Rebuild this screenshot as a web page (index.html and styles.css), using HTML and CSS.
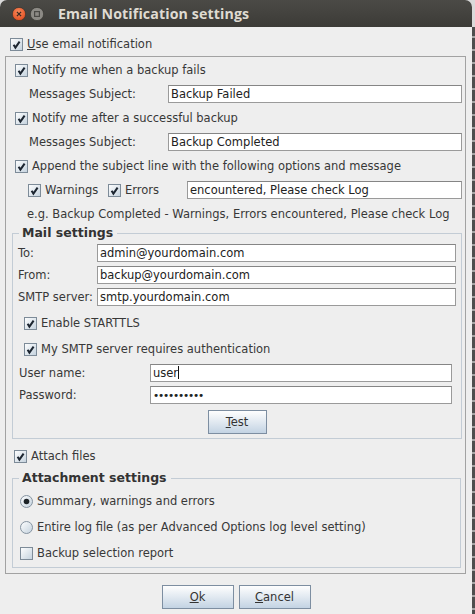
FILE: index.html
```html
<!DOCTYPE html>
<html>
<head>
<meta charset="utf-8">
<link rel="stylesheet" href="styles.css">
</head>
<body>
<svg class="defs" width="0" height="0" aria-hidden="true">
  <defs>
    <linearGradient id="gbox" x1="0" y1="0" x2="1" y2="1">
      <stop offset="0" stop-color="#ffffff"/>
      <stop offset="1" stop-color="#c3d1dd"/>
    </linearGradient>
    <symbol id="cbOff" viewBox="0 0 13 13">
      <rect x="0.5" y="0.5" width="12" height="12" fill="url(#gbox)" stroke="#7d8b98"/>
    </symbol>
    <symbol id="cbOn" viewBox="0 0 13 13">
      <rect x="0.5" y="0.5" width="12" height="12" fill="url(#gbox)" stroke="#7d8b98"/>
      <path d="M3.6 6.8 L5.4 9.6 L9.6 3.6" fill="none" stroke="#1c2530" stroke-width="2"/>
    </symbol>
    <symbol id="rdOff" viewBox="0 0 13 13">
      <circle cx="6.5" cy="6.5" r="6" fill="url(#gbox)" stroke="#8593a0"/>
    </symbol>
    <symbol id="rdOn" viewBox="0 0 13 13">
      <circle cx="6.5" cy="6.5" r="6" fill="url(#gbox)" stroke="#8593a0"/>
      <circle cx="6.5" cy="6.5" r="2.8" fill="#1c2226"/>
    </symbol>
  </defs>
</svg>
<div class="screen">
  <div class="window">
    <div class="titlebar">
      <svg class="wbtn wclose" viewBox="0 0 14 14">
        <defs>
          <radialGradient id="gclose" cx="0.45" cy="0.35" r="0.7">
            <stop offset="0" stop-color="#f88a5c"/>
            <stop offset="1" stop-color="#df4a1e"/>
          </radialGradient>
        </defs>
        <circle cx="7" cy="7" r="6.6" fill="url(#gclose)" stroke="#30302c" stroke-width="0.6"/>
        <path d="M4.9 4.9 L9.1 9.1 M9.1 4.9 L4.9 9.1" stroke="#3a2a22" stroke-width="1.3"/>
      </svg>
      <svg class="wbtn wmin" viewBox="0 0 14 14">
        <circle cx="7" cy="7" r="6.6" fill="#8c8a85" stroke="#30302c" stroke-width="0.6"/>
        <rect x="4.6" y="4.6" width="4.8" height="4.8" fill="none" stroke="#4a4945" stroke-width="1.2"/>
      </svg>
      <span class="title">Email Notification settings</span>
    </div>
    <div class="content">
      <div class="row toprow">
        <svg class="cb"><use href="#cbOn"/></svg>
        <span><u>U</u>se email notification</span>
      </div>
      <div class="panel">
        <div class="row r-cb">
          <svg class="cb"><use href="#cbOn"/></svg>
          <span>Notify me when a backup fails</span>
        </div>
        <div class="row r-subj">
          <span class="lbl-subj">Messages Subject:</span>
          <div class="field">Backup Failed</div>
        </div>
        <div class="row r-cb">
          <svg class="cb"><use href="#cbOn"/></svg>
          <span>Notify me after a successful backup</span>
        </div>
        <div class="row r-subj">
          <span class="lbl-subj">Messages Subject:</span>
          <div class="field">Backup Completed</div>
        </div>
        <div class="row r-cb">
          <svg class="cb"><use href="#cbOn"/></svg>
          <span>Append the subject line with the following options and message</span>
        </div>
        <div class="row r-warn">
          <div class="opt opt-w">
            <svg class="cb"><use href="#cbOn"/></svg>
            <span>Warnings</span>
          </div>
          <div class="opt opt-e">
            <svg class="cb"><use href="#cbOn"/></svg>
            <span>Errors</span>
          </div>
          <div class="field">encountered, Please check Log</div>
        </div>
        <div class="row r-eg">
          <span>e.g. Backup Completed - Warnings, Errors encountered, Please check Log</span>
        </div>

        <fieldset class="group mail">
          <legend>Mail settings</legend>
          <div class="group-body mail-body">
            <div class="row r-mail">
              <span class="lbl-mail">To:</span>
              <div class="field">admin@yourdomain.com</div>
            </div>
            <div class="row r-mail">
              <span class="lbl-mail">From:</span>
              <div class="field">backup@yourdomain.com</div>
            </div>
            <div class="row r-mail">
              <span class="lbl-mail">SMTP server:</span>
              <div class="field">smtp.yourdomain.com</div>
            </div>
            <div class="row r-mcb first-mcb">
              <svg class="cb"><use href="#cbOn"/></svg>
              <span>Enable STARTTLS</span>
            </div>
            <div class="row r-mcb">
              <svg class="cb"><use href="#cbOn"/></svg>
              <span>My SMTP server requires authentication</span>
            </div>
            <div class="row r-auth">
              <span class="lbl-auth">User name:</span>
              <div class="field">user<span class="caret"></span></div>
            </div>
            <div class="row r-auth">
              <span class="lbl-auth">Password:</span>
              <div class="field pw">••••••••••</div>
            </div>
            <div class="test-row">
              <button class="btn btn-test"><u>T</u>est</button>
            </div>
          </div>
        </fieldset>

        <div class="row r-attach">
          <svg class="cb"><use href="#cbOn"/></svg>
          <span>Attach files</span>
        </div>

        <fieldset class="group attach">
          <legend>Attachment settings</legend>
          <div class="group-body attach-body">
            <div class="row r-att">
              <svg class="cb"><use href="#rdOn"/></svg>
              <span>Summary, warnings and errors</span>
            </div>
            <div class="row r-att">
              <svg class="cb"><use href="#rdOff"/></svg>
              <span>Entire log file (as per Advanced Options log level setting)</span>
            </div>
            <div class="row r-att">
              <svg class="cb"><use href="#cbOff"/></svg>
              <span>Backup selection report</span>
            </div>
          </div>
        </fieldset>
      </div>
      <div class="buttons">
        <button class="btn btn-dlg"><u>O</u>k</button>
        <button class="btn btn-dlg"><u>C</u>ancel</button>
      </div>
    </div>
  </div>
  <div class="edge"></div>
</div>
</body>
</html>
```

FILE: styles.css
```css
html, body {
  margin: 0;
  padding: 0;
}

body {
  width: 475px;
  height: 614px;
  overflow: hidden;
  background: #dadada;
  font-family: "DejaVu Sans", "Liberation Sans", sans-serif;
  font-size: 11.5px;
  color: #383838;
}

.defs {
  position: absolute;
  width: 0;
  height: 0;
}

.screen {
  display: flex;
  width: 475px;
  height: 614px;
}

.window {
  width: 472px;
  height: 614px;
  flex: none;
  display: flex;
  flex-direction: column;
  background: #eeeeee;
  border-radius: 7px 7px 0 0;
  overflow: hidden;
}

.edge {
  width: 3px;
  flex: none;
  margin-top: 27px;
  background: repeating-linear-gradient(#4e4e4e 0 9px, #a5a5a5 9px 11px, #4e4e4e 11px 13px);
}

/* title bar */
.titlebar {
  height: 27px;
  flex: none;
  display: flex;
  align-items: center;
  padding-left: 12px;
  background: linear-gradient(#4b4a46, #3c3b37);
}

.wbtn {
  width: 14px;
  height: 14px;
  flex: none;
}

.wclose {
  margin-right: 4px;
}

.wmin {
  margin-right: 14px;
}

.title {
  font-family: "Open Sans", "DejaVu Sans", sans-serif;
  font-weight: 700;
  font-size: 14.2px;
  letter-spacing: 0.12px;
  color: #dfdbd2;
  line-height: 18px;
}

/* content */
.content {
  padding-top: 5px;
}

.row {
  display: flex;
  align-items: center;
  height: 24px;
  white-space: nowrap;
  line-height: 14px;
}

.cb {
  width: 13px;
  height: 13px;
  flex: none;
  margin-right: 4px;
}

u {
  text-decoration: underline;
  text-underline-offset: 1px;
}

.toprow {
  padding-left: 10px;
}

.panel {
  margin: 0 6px 0 5px;
  border: 1px solid #a2a2a2;
  padding: 1px 3px 5px 0;
}

.r-cb {
  padding-left: 9px;
}

.r-subj {
  padding-left: 23px;
}

.lbl-subj {
  width: 139px;
  flex: none;
}

.field {
  flex: 1;
  height: 18px;
  box-sizing: border-box;
  border: 1px solid #9a9a9a;
  border-top-color: #858585;
  background: #ffffff;
  padding-left: 2px;
  line-height: 16px;
  color: #222222;
  white-space: nowrap;
  overflow: hidden;
}

.r-warn {
  padding-left: 22px;
}

.opt {
  display: flex;
  align-items: center;
  flex: none;
}

.opt-w {
  width: 80px;
}

.opt-e {
  width: 79px;
}

.r-eg {
  padding-left: 21px;
}

/* groups */
.group {
  margin: 0;
  padding: 0;
  border: 1px solid #c3ccd5;
  min-width: 0;
}

.group legend {
  margin-left: 6px;
  padding: 0 4px 0 3px;
  font-weight: 700;
  font-size: 12.5px;
  color: #333333;
}

.mail {
  margin: 0 0 0 6px;
}

.mail legend {
  line-height: 14px;
}

.mail-body {
  padding: 2px 5px 4px 5px;
}

.r-mail {
  height: 22px;
}

.lbl-mail {
  width: 79px;
  flex: none;
}

.r-mcb {
  height: 26px;
  padding-left: 6px;
}

.first-mcb {
  margin-top: 2px;
}

.r-auth {
  height: 22px;
  padding-left: 1px;
  padding-right: 4px;
}

.lbl-auth {
  width: 131px;
  flex: none;
}

.caret {
  display: inline-block;
  width: 1px;
  height: 13px;
  background: #111111;
  vertical-align: -2px;
}

.pw {
  letter-spacing: -1.2px;
  font-size: 10.5px;
}

.test-row {
  display: flex;
  justify-content: center;
  margin-top: 4px;
}

.btn {
  height: 24px;
  box-sizing: border-box;
  border: 1px solid #7d8ea1;
  background: linear-gradient(#fefefe, #e4ebf2 45%, #c3d3e3);
  font-family: "DejaVu Sans", "Liberation Sans", sans-serif;
  font-size: 11.5px;
  color: #333333;
  padding: 0;
  margin: 0;
  border-radius: 0;
}

.btn-test {
  width: 59px;
}

.r-attach {
  margin-top: 5px;
  padding-left: 8px;
}

.attach {
  margin: 2px 1px 0 6px;
}

.attach legend {
  line-height: 16px;
}

.attach-body {
  padding: 2px 0 1px 7px;
}

.r-att {
  height: 26px;
}

.buttons {
  display: flex;
  justify-content: center;
  gap: 5px;
  margin-top: 11px;
}

.btn-dlg {
  width: 72px;
}
```
